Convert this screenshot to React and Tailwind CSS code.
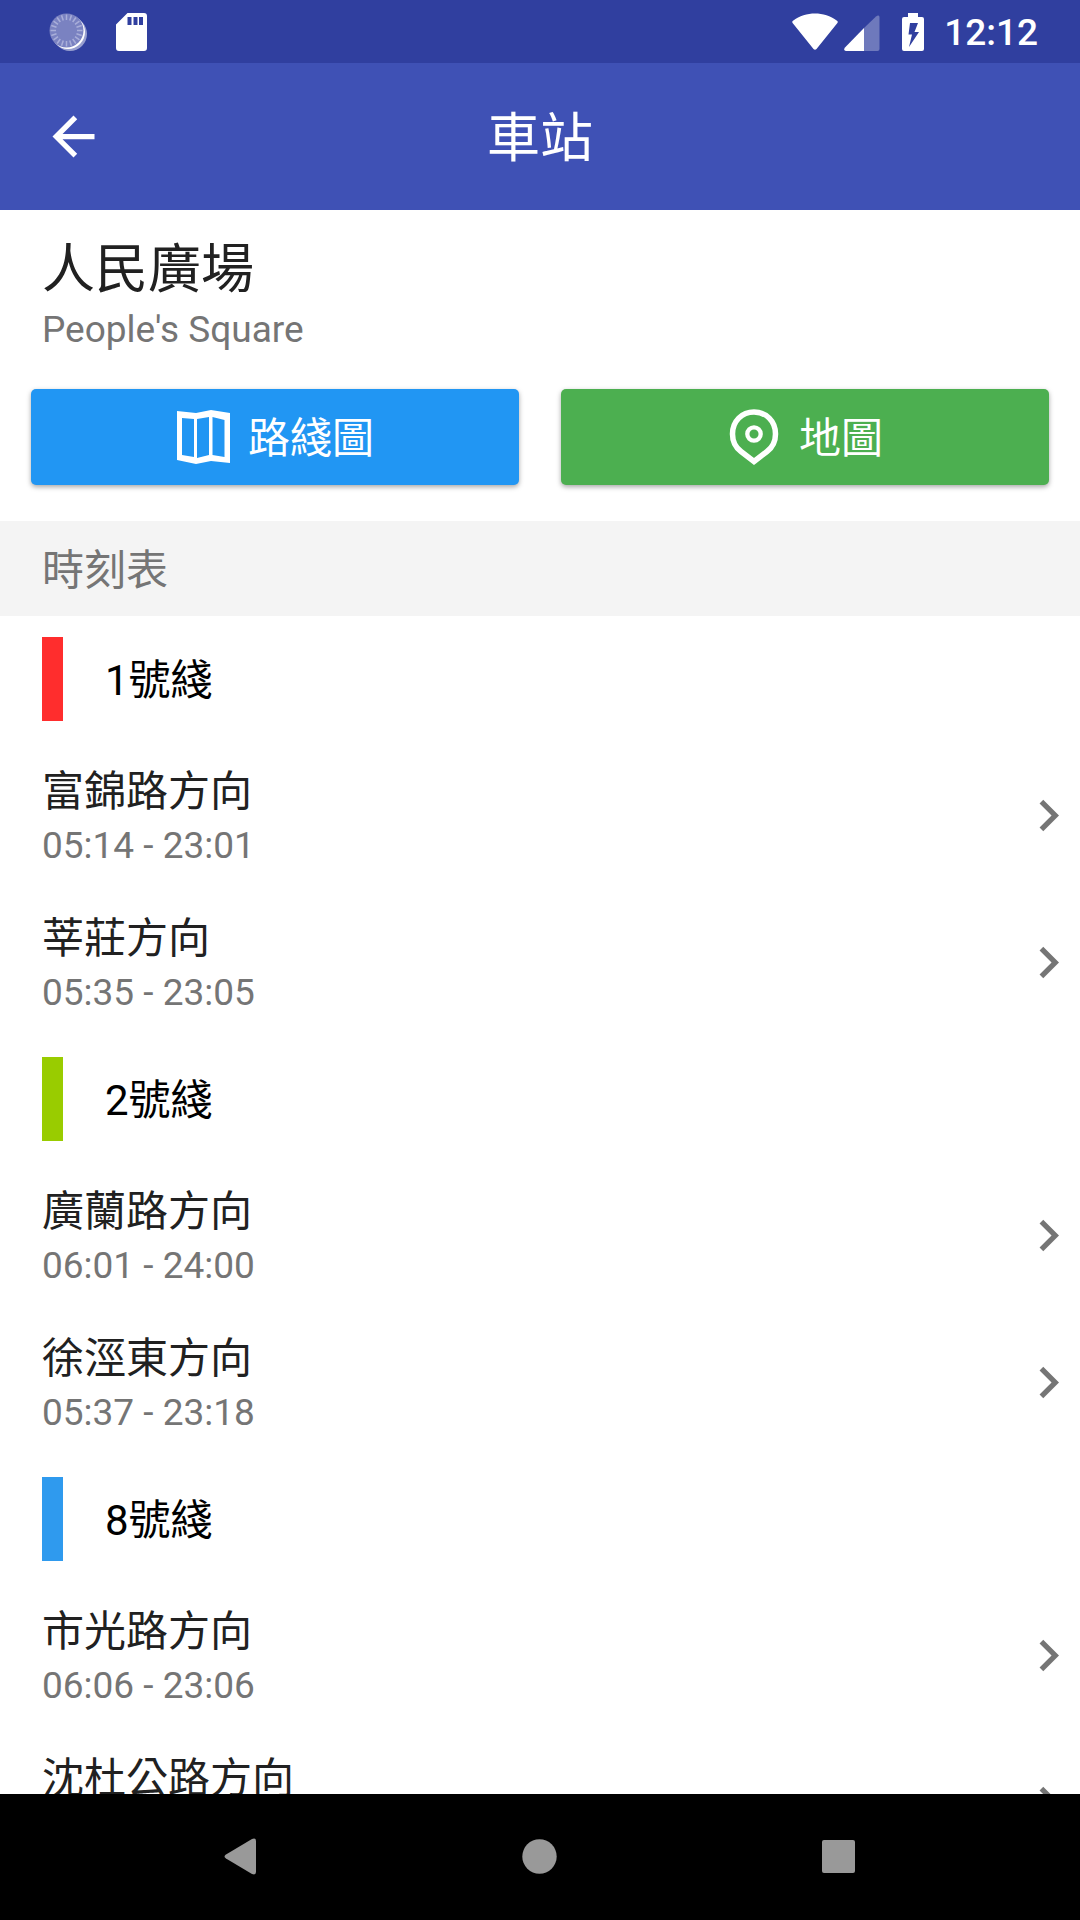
import React from 'react';

const station = {
    name: '人民廣場',
    englishName: "People's Square",
    lines: [
        {
            name: '1號綫',
            color: 'bg-[#ff2d2d]',
            directions: [
                { name: '富錦路方向', hours: '05:14 - 23:01' },
                { name: '莘莊方向', hours: '05:35 - 23:05' },
            ],
        },
        {
            name: '2號綫',
            color: 'bg-[#99cc00]',
            directions: [
                { name: '廣蘭路方向', hours: '06:01 - 24:00' },
                { name: '徐涇東方向', hours: '05:37 - 23:18' },
            ],
        },
        {
            name: '8號綫',
            color: 'bg-[#2f9aee]',
            directions: [
                { name: '市光路方向', hours: '06:06 - 23:06' },
                { name: '沈杜公路方向' },
            ],
        },
    ],
};

// Tick marks of the sync spinner, one every 18 degrees
const ticks = Array.from({ length: 20 }, (_, i) => i * 18);

const StatusBar = () => (
    <div className="flex h-[63px] shrink-0 items-center justify-between bg-[#303f9f] pr-[42px] pl-[49px] text-white">
        <div className="flex items-center gap-[29px]">
            <svg width="38" height="38" viewBox="0 0 38 38" aria-hidden="true">
                <circle cx="21" cy="21" r="17" fill="#fff" opacity="0.5" />
                <circle cx="19" cy="19" r="17" fill="#fff" />
                <circle cx="17.5" cy="17.5" r="17" fill="#7a82c1" />
                {ticks.map((angle) => (
                    <path
                        key={angle}
                        d="M17.5 1.5v5.5"
                        stroke="#a9aed9"
                        strokeWidth="1.5"
                        transform={`rotate(${angle} 17.5 17.5)`}
                    />
                ))}
            </svg>
            <svg width="31" height="38" viewBox="0 0 31 38" aria-hidden="true">
                <path
                    fill="#fff"
                    fillRule="evenodd"
                    d="M11.5 0H28a3 3 0 0 1 3 3v32a3 3 0 0 1-3 3H3a3 3 0 0 1-3-3V11.5zM11.5 4v8h4V4zM17.5 4v8h4V4zM23 4v8h4V4z"
                />
            </svg>
        </div>
        <div className="flex items-center">
            <svg width="46" height="38" viewBox="0 0 46 38" aria-hidden="true">
                <path fill="#fff" d="M1 10.5C0 9.5 0 8.500 1 7.8C14-1.8 32-1.8 45 7.8C46 8.5 46 9.5 45 10.5L24.5 36Q23 37.5 21.5 36z" />
            </svg>
            <svg className="ml-[6px]" width="36" height="38" viewBox="0 0 36 38" aria-hidden="true">
                <path fill="#fff" opacity="0.3" d="M20 15L32 3.5Q35 1.5 35.5 4V36Q35.5 38 33.5 38H20z" />
                <path fill="#fff" d="M20 15V38H2Q-1 37.5 1 34.5z" />
            </svg>
            <svg className="ml-[22px]" width="22" height="38" viewBox="0 0 22 38" aria-hidden="true">
                <path
                    fill="#fff"
                    fillRule="evenodd"
                    d="M6 0h10v4h4a2 2 0 0 1 2 2v30a2 2 0 0 1-2 2H2a2 2 0 0 1-2-2V6a2 2 0 0 1 2-2h4zM8 10L6.5 21.5H10L7 34L17 19H12.5L16 10z"
                />
            </svg>
            <span className="ml-5 pt-[3px] text-[37px] leading-[44px] font-medium">12:12</span>
        </div>
    </div>
);

const AppBar = () => (
    <header className="grid h-[147px] shrink-0 grid-cols-[63px_1fr_63px] items-center bg-[#3f51b5] px-[42px] text-white">
        <button type="button" aria-label="返回">
            <svg width="63" height="63" viewBox="0 0 24 24" fill="currentColor">
                <path d="M20 11H7.83l5.59-5.59L12 4l-8 8 8 8 1.41-1.41L7.83 13H20v-2z" />
            </svg>
        </button>
        <h1 className="pt-1 text-center text-[53px] leading-[62px]">車站</h1>
    </header>
);

const ActionButton = ({ label, color, children }) => (
    <button
        type="button"
        className={`flex h-24 flex-1 items-center justify-center rounded-[5px] text-[42px] leading-[50px] text-white shadow-[0_2px_5px_rgba(0,0,0,0.35)] ${color}`}
    >
        {children}
        <span className="pt-[3px]">{label}</span>
    </button>
);

const DirectionRow = ({ direction }) => (
    <li>
        <button type="button" className="flex h-[147px] w-full items-center justify-between pl-[42px] text-left">
            <span className="flex min-h-[110px] flex-col pt-[3px]">
                <span className="text-[42px] leading-[56px] text-[#212121]">{direction.name}</span>
                {direction.hours && (
                    <span className="text-[37px] leading-[51px] text-[#757575]">{direction.hours}</span>
                )}
            </span>
            <svg className="text-[#757575]" width="63" height="63" viewBox="0 0 24 24" fill="currentColor" aria-hidden="true">
                <path d="M10 6L8.59 7.41 13.17 12l-4.58 4.59L10 18l6-6z" />
            </svg>
        </button>
    </li>
);

const LineSection = ({ line }) => (
    <section>
        <div className="flex h-[126px] items-center gap-[42px] pl-[42px]">
            <span className={`h-[84px] w-[21px] ${line.color}`} />
            <h3 className="pt-[3px] text-[42px] leading-[50px] text-black">{line.name}</h3>
        </div>
        <ul>
            {line.directions.map((direction) => (
                <DirectionRow key={direction.name} direction={direction} />
            ))}
        </ul>
    </section>
);

const NavigationBar = () => (
    <nav className="flex h-[126px] shrink-0 items-center justify-center gap-[236px] bg-black pr-0.5 pb-0.5 text-[#999999]">
        <button type="button" aria-label="Back">
            <svg width="63" height="63" viewBox="0 0 63 63" fill="currentColor">
                <path d="M17 29.5L43 14Q47 12.5 47 16V47Q47 50.5 43 49L17 33.5Q14 31.5 17 29.5z" />
            </svg>
        </button>
        <button type="button" aria-label="Home">
            <svg width="63" height="63" viewBox="0 0 63 63" fill="currentColor">
                <circle cx="31.5" cy="31.5" r="17.2" />
            </svg>
        </button>
        <button type="button" aria-label="Recent apps">
            <svg width="63" height="63" viewBox="0 0 63 63" fill="currentColor">
                <rect x="15" y="15" width="33" height="33" rx="2" />
            </svg>
        </button>
    </nav>
);

function App() {
    return (
        <div
            lang="zh-Hant"
            className="flex h-screen flex-col bg-white font-[Roboto,'Noto_Sans_CJK_TC',sans-serif]"
        >
            <StatusBar />
            <AppBar />
            <main className="min-h-0 flex-1 overflow-hidden">
                <div className="px-[42px] pt-[27px]">
                    <h2 className="text-[53px] leading-[66px] text-[#212121]">{station.name}</h2>
                    <p className="text-[37px] leading-[54px] text-[#757575]">{station.englishName}</p>
                </div>
                <div className="flex gap-[42px] px-[31px] pt-8 pb-9">
                    <ActionButton label="路綫圖" color="bg-[#2196f3]">
                        <svg className="mr-[18px]" width="54" height="54" viewBox="0 0 54 54" aria-hidden="true">
                            <path
                                fill="#fff"
                                fillRule="evenodd"
                                d="M1 1L20 3L35 0L54 3V53L35 51L20 54L1 50zM6 8V45L18 47V9zM21 9V48L33 45V7zM36.5 7V45L48.500 47V10z"
                            />
                        </svg>
                    </ActionButton>
                    <ActionButton label="地圖" color="bg-[#4caf50]">
                        <svg className="ml-0.5 mr-[20px]" width="50" height="56" viewBox="0 0 50 56" fill="none" stroke="#fff" aria-hidden="true">
                            <path
                                strokeWidth="5.5"
                                d="M25 52.5L38 42.5C44 38 46.5 32 46.5 25C46.5 12 37 3 25 3S3.5 12 3.5 25C3.5 32 6 38 12 42.5z"
                            />
                            <circle cx="25" cy="25" r="6.7" strokeWidth="4.3" />
                        </svg>
                    </ActionButton>
                </div>
                <h2 className="bg-[#f4f4f4] px-[42px] pt-6 pb-5 text-[42px] leading-[51px] text-[#757575]">時刻表</h2>
                {station.lines.map((line) => (
                    <LineSection key={line.name} line={line} />
                ))}
            </main>
            <NavigationBar />
        </div>
    );
}

export default App;
